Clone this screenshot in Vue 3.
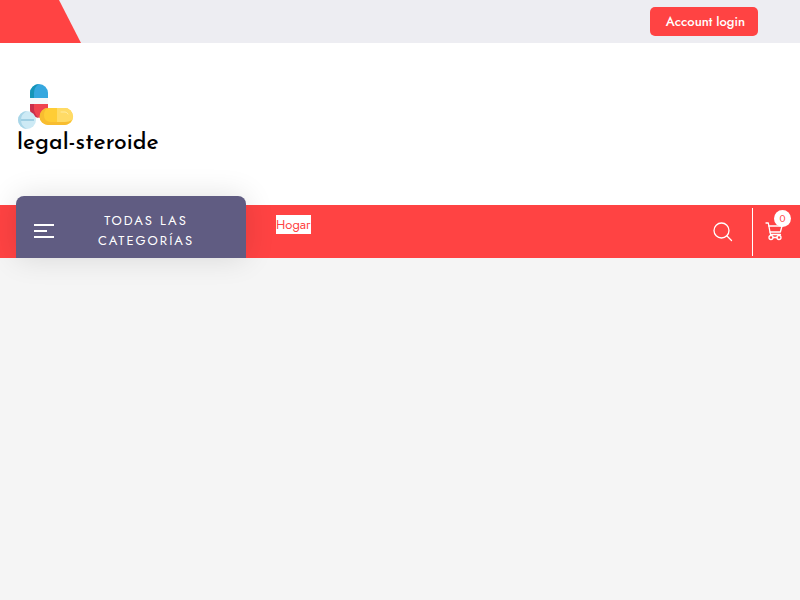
<template>
  <div class="page">
    <header>
      <!-- top bar -->
      <div class="top-bar">
        <div class="top-shape"></div>
        <button type="button" class="login-btn">Account login</button>
      </div>

      <!-- logo -->
      <div class="brand-row">
        <a href="#" class="brand">
          <svg class="brand-icon" viewBox="0 0 58 46" aria-hidden="true">
            <path d="M13 14V9a9 9 0 0 1 18 0v5z" fill="#35a7df" />
            <path d="M13 14V9a9 9 0 0 1 9-9q-5 3-5 9v5z" fill="#1595b8" />
            <path d="M13 14h18v6H13z" fill="#f4f8fb" />
            <path d="M13 20h18v5l-7 9q-11-1-11-9z" fill="#ef4350" />
            <path d="M13 20h4v6q1 5 5 8-9-1-9-9z" fill="#c92f4c" />
            <circle cx="10" cy="36" r="9" fill="#cdeaf5" />
            <path d="M10 27a9 9 0 0 0 0 18q-6-3-6-9t6-9z" fill="#a9d6e8" />
            <path d="M4 35h13v2H4z" fill="#9fcfe3" />
            <rect x="23" y="24" width="33" height="17" rx="8.500" fill="#ffcd35" />
            <path d="M40 24h7.500a8.500 8.500 0 0 1 0 17H40z" fill="#ffdb66" />
            <path d="M31 24a8.500 8.500 0 0 0 0 17h17q5-1 7-5-3 2-7 2H34q-7 0-7-7 0-5 4-7z" fill="#f8bd30" />
            <path d="M44 28h4q2 0 3 2" fill="none" stroke="#ffeba0" stroke-width="1" stroke-linecap="round" />
          </svg>
          <span class="brand-name">legal-steroide</span>
        </a>
      </div>

      <!-- navigation -->
      <div class="nav-bar">
        <button type="button" class="category-btn">
          <span class="bars">
            <span class="bar"></span>
            <span class="bar short"></span>
            <span class="bar"></span>
          </span>
          <span class="category-text">Todas las categorías</span>
        </button>

        <nav class="menu">
          <a href="#" class="menu-link">Hogar</a>
        </nav>

        <div class="actions">
          <button type="button" class="icon-btn search-btn" aria-label="Buscar">
            <svg width="20" height="20" viewBox="0 0 20 20" aria-hidden="true">
              <circle cx="8.500" cy="8.500" r="7.500" />
              <path d="M14 14l4.500 4.500" />
            </svg>
          </button>
          <button type="button" class="icon-btn cart-btn" aria-label="Carrito">
            <svg width="18" height="19" viewBox="0 0 18 19" aria-hidden="true">
              <path d="M1 1h2.300l2.200 11.500h10" />
              <path d="M3.800 4h13.200l-1.600 6H5" />
              <circle cx="6" cy="15.500" r="2" />
              <circle cx="14" cy="15.500" r="2" />
              <path d="M8 15.500h4" />
            </svg>
            <span class="cart-count">{{ cartCount }}</span>
          </button>
        </div>
      </div>
    </header>
  </div>
</template>

<script setup>
import { ref } from "vue";

const cartCount = ref(0);
</script>

<style>
body {
  margin: 0;
  background: #f5f5f5;
}
</style>

<style scoped>
.page {
  min-height: 100vh;
  background: #f5f5f5;
  font-family: Jost, Lato, "Liberation Sans", sans-serif;
}

button {
  font-family: inherit;
  border: none;
  cursor: pointer;
}

/* top bar */
.top-bar {
  display: flex;
  justify-content: space-between;
  align-items: center;
  height: 43px;
  padding-right: 42px;
  box-sizing: border-box;
  background: #ededf2;
}

.top-shape {
  width: 81px;
  height: 100%;
  background: #ff4343;
  clip-path: polygon(0 0, 59px 0, 100% 100%, 0 100%);
}

.login-btn {
  height: 29px;
  padding: 0 13px 0 16px;
  border-radius: 5px;
  background: #ff4343;
  color: #fff;
  font-size: 13px;
  font-weight: 500;
  line-height: 20px;
}

/* logo */
.brand-row {
  display: flex;
  padding: 41px 17px 48px;
  background: #fff;
}

.brand {
  display: flex;
  flex-direction: column;
  color: #000;
  text-decoration: none;
}

.brand-icon {
  width: 58px;
  height: 46px;
}

.brand-name {
  font-family: "Josefin Sans", Lato, sans-serif;
  font-size: 23px;
  font-weight: 500;
  line-height: 27px;
}

/* navigation */
.nav-bar {
  display: flex;
  align-items: stretch;
  height: 53px;
  padding: 0 8px 0 16px;
  background: #ff4343;
}

.category-btn {
  display: flex;
  align-items: center;
  width: 230px;
  margin-top: -9px;
  padding: 8px 18px 0;
  border-radius: 8px 8px 0 0;
  background: #605c82;
  box-shadow: 0 0 30px rgba(0, 0, 0, 0.12);
  color: #fff;
}

.bars {
  display: flex;
  flex-direction: column;
  gap: 4px;
  width: 20px;
}

.bar {
  height: 2px;
  background: #fff;
}

.bar.short {
  width: 13px;
}

.category-text {
  flex: 1;
  padding: 0 16px 0 26px;
  font-size: 13px;
  line-height: 20px;
  letter-spacing: 2px;
  text-transform: uppercase;
}

.menu {
  flex: 1;
  padding: 10px 30px;
  line-height: 19px;
}

.menu-link {
  display: block;
  width: fit-content;
  background: #fff;
  color: #ff4343;
  font-size: 13px;
  text-decoration: none;
}

/* search and cart */
.actions {
  display: flex;
  align-items: center;
}

.icon-btn {
  display: flex;
  align-items: center;
  padding: 0;
  background: none;
}

.icon-btn svg {
  fill: none;
  stroke: #fff;
  stroke-width: 1.3;
  stroke-linecap: round;
  stroke-linejoin: round;
}

.search-btn {
  margin-right: 19px;
}

.cart-btn {
  position: relative;
  height: 48px;
  padding: 0 9px 0 12px;
  border-left: 1px solid #fff;
}

.cart-count {
  position: absolute;
  top: 2px;
  right: 1px;
  width: 17px;
  height: 17px;
  border-radius: 50%;
  background: #fff;
  color: #ff4343;
  font-size: 10px;
  line-height: 17px;
  text-align: center;
}
</style>
